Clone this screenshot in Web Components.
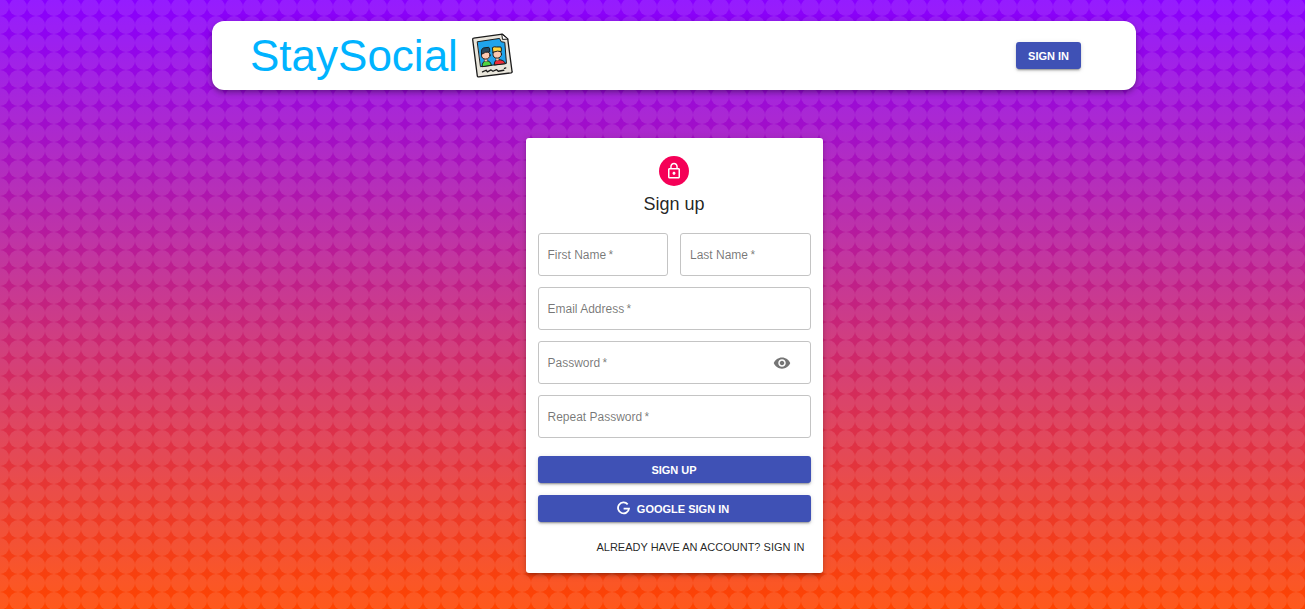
<!DOCTYPE html>
<html lang="en">
<head>
<meta charset="utf-8">
<meta name="viewport" content="width=device-width, initial-scale=1">
<title>StaySocial</title>
<style>
html { height: 100%; }
body { margin: 0; min-height: 100%; font-family: "Liberation Sans", Arial, sans-serif; color: rgba(0,0,0,.87);
  background-color: #c21f80;
  background-image:
    url("data:image/svg+xml,%3Csvg xmlns='http://www.w3.org/2000/svg' width='18' height='18'%3E%3Cg fill='%23fff' fill-opacity='.11'%3E%3Ccircle cx='0' cy='9' r='9'/%3E%3Ccircle cx='18' cy='9' r='9'/%3E%3C/g%3E%3C/svg%3E"),
    linear-gradient(#80f, #f40);
  background-position: 0 -2px, 0 0; background-size: 18px 18px, 100% 100vh; }
</style>
</head>
<body>
<social-page>
  <site-header slot="header">
    <app-logo></app-logo>
    <action-button slot="action">Sign in</action-button>
  </site-header>
  <auth-card>
    <form-field label="First Name" name="firstName" half></form-field>
    <form-field label="Last Name" name="lastName" half></form-field>
    <form-field label="Email Address" name="email" type="email"></form-field>
    <form-field label="Password" name="password" type="password" reveal></form-field>
    <form-field label="Repeat Password" name="confirmPassword" type="password"></form-field>
    <action-button slot="actions">Sign up</action-button>
    <action-button slot="actions"><svg slot="icon" width="15" height="15" viewBox="0 0 15 15" aria-hidden="true"><path fill="none" stroke="currentColor" stroke-width="1.800" d="M11.700 3.300A5.500 5.500 0 1 0 13 7.600H7.600"/></svg>Google Sign In</action-button>
    <a slot="switch" href="#signin">Already have an account? Sign in</a>
  </auth-card>
</social-page>
<script>
const define = (name, markup, setup) => customElements.define(name, class extends HTMLElement {
  constructor() {
    super();
    const t = document.createElement('template');
    t.innerHTML = markup;
    this.attachShadow({ mode: 'open' }).append(t.content.cloneNode(true));
    if (setup) setup(this, this.shadowRoot);
  }
});

define('social-page', `
<style>
:host { display: block; padding: 21px 0 36px 43px; }
main { display: flex; justify-content: center; padding-top: 48px; }
</style>
<slot name="header"></slot><main><slot></slot></main>`);

define('site-header', `
<style>
:host { display: block; max-width: 924px; margin: 0 auto; }
header { display: flex; align-items: center; justify-content: space-between; box-sizing: border-box; min-height: 69px;
  padding: 0 55px 0 38px; border-radius: 12px; background: #fff;
  box-shadow: 0 2px 4px -1px rgba(0,0,0,.2), 0 4px 5px rgba(0,0,0,.14), 0 1px 10px rgba(0,0,0,.12); }
</style>
<header><slot></slot><slot name="action"></slot></header>`);

define('app-logo', `
<style>
:host { display: block; }
a { display: flex; align-items: center; gap: 14px; color: #00b3ff; text-decoration: none; font-size: 44px; line-height: 52px; }
svg { display: block; }
</style>
<a href="#home">StaySocial
<svg width="41" height="45" viewBox="29 26 125 136" role="img" aria-label="Photo of two friends" stroke="#1b1b1b" stroke-linejoin="round" stroke-linecap="round">
  <path d="M34 41 Q31 41 31 45 L45 155 Q46 160 50 159 L148 147 Q152 146 151 142 L138 44 L122 29 Z" fill="#e9e6dc" stroke-width="4"/>
  <path d="M120 30 L122 45 L138 44 Z" fill="#fff" stroke-width="3"/>
  <path d="M46 52 L113 42 L118 52 L129 54 L134 118 L56 128 Z" fill="#1fa4ec" stroke-width="3"/>
  <path d="M60 127 Q60 111 72 110 Q85 109 88 123 Z" fill="#4fd53f" stroke-width="3"/>
  <path d="M97 122 Q96 108 108 107 Q126 106 131 118 Z" fill="#ee2b38" stroke-width="3"/>
  <path d="M67 102 h9 v9 q-5 4 -9 0z M102 100 h9 v8 q-5 4 -9 0z" fill="#fbc5a8" stroke-width="1"/>
  <ellipse cx="71" cy="93" rx="13" ry="12" fill="#fcc9b0" stroke-width="3"/>
  <ellipse cx="106" cy="90" rx="13" ry="12" fill="#fcc9b0" stroke-width="3"/>
  <path d="M58 90 Q56 73 64 71 L80 69 Q84 71 83 83 Q70 82 58 90Z" fill="#26475e" stroke-width="3"/>
  <path d="M93 84 L91 70 Q97 66 103 68 L117 68 Q120 74 118 82 Q108 78 93 84Z" fill="#ffd43d" stroke-width="3"/>
  <path d="M61 144 L72 139 L76 144 L87 138 L93 142 L104 137 L109 142 L126 139 M128 133 L132 132" fill="none" stroke-width="4"/>
</svg></a>`);

define('action-button', `
<style>
:host { display: block; }
button { display: flex; align-items: center; justify-content: center; gap: 6px; width: 100%; min-height: 27px; padding: 0 12px;
  border: 0; border-radius: 3px; background: #3f51b5; color: #fff; cursor: pointer;
  font: 700 11px/18px "Liberation Sans", Arial, sans-serif; text-transform: uppercase;
  box-shadow: 0 3px 1px -2px rgba(0,0,0,.2), 0 2px 2px rgba(0,0,0,.14), 0 1px 5px rgba(0,0,0,.12); }
::slotted(svg) { margin-left: -3px; }
</style>
<button type="button"><slot name="icon"></slot><span><slot></slot></span></button>`);

define('auth-card', `
<style>
:host { display: block; width: 297px; max-width: 100%; }
section { padding: 18px 12px 17px; border-radius: 3px; background: #fff;
  box-shadow: 0 3px 3px -2px rgba(0,0,0,.2), 0 3px 4px rgba(0,0,0,.14), 0 1px 8px rgba(0,0,0,.12); }
.badge { display: grid; place-items: center; width: 30px; height: 30px; margin: 0 auto 6px; border-radius: 50%; background: #f50057; }
h1 { margin: 0 0 17px; text-align: center; font-size: 18px; line-height: 24px; font-weight: 400; }
.fields { display: grid; grid-template-columns: 1fr 1fr; gap: 11px 12px; margin-bottom: 18px; }
.actions { display: grid; gap: 12px; }
.switch { display: flex; justify-content: flex-end; padding: 16px 6px 0; }
::slotted(a) { color: inherit; text-decoration: none; text-transform: uppercase; font-size: 11px; line-height: 18px; }
</style>
<section>
  <div class="badge"><svg width="18" height="18" viewBox="0 0 24 24" aria-hidden="true"><path fill="#fff" d="M12 17c1.100 0 2-.9 2-2s-.9-2-2-2-2 .9-2 2 .9 2 2 2zm6-9h-1V6c0-2.760-2.240-5-5-5S7 3.240 7 6v2H6c-1.100 0-2 .9-2 2v10c0 1.100.9 2 2 2h12c1.100 0 2-.9 2-2V10c0-1.100-.9-2-2-2zM8.900 6c0-1.710 1.390-3.100 3.100-3.100s3.100 1.390 3.100 3.100v2H8.900V6zM18 20H6V10h12v10z"/></svg></div>
  <h1>Sign up</h1>
  <form>
    <div class="fields"><slot></slot></div>
    <div class="actions"><slot name="actions"></slot></div>
    <div class="switch"><slot name="switch"></slot></div>
  </form>
</section>`);

define('form-field', `
<style>
:host { display: block; grid-column: 1 / -1; }
:host([half]) { grid-column: auto; }
.box { display: grid; grid-template-columns: 1fr auto; align-items: center; box-sizing: border-box; height: 43px; padding: 0 9px;
  border: 1px solid #c4c4c4; border-radius: 3px; }
.box:focus-within { border-color: #3f51b5; }
label, input { grid-area: 1 / 1; min-width: 0; font: 12px/18px "Liberation Sans", Arial, sans-serif; }
label { color: rgba(0,0,0,.54); pointer-events: none; white-space: nowrap; }
input { width: 100%; padding: 0; border: 0; outline: 0; background: none; color: inherit; }
input:not(:placeholder-shown) + label, input:focus + label { visibility: hidden; }
button { display: none; padding: 0; border: 0; margin-right: 10px; background: none; color: #757575; cursor: pointer; }
:host([reveal]) button { display: block; }
svg { display: block; }
</style>
<div class="box">
  <input id="field" placeholder=" " required>
  <label for="field"></label>
  <button type="button" aria-label="Show password"><svg width="18" height="18" viewBox="0 0 24 24" aria-hidden="true"><path fill="currentColor" d="M12 4.500C7 4.500 2.730 7.610 1 12c1.730 4.390 6 7.500 11 7.500s9.270-3.110 11-7.500c-1.730-4.390-6-7.500-11-7.500zM12 17c-2.760 0-5-2.240-5-5s2.240-5 5-5 5 2.240 5 5-2.240 5-5 5zm0-8c-1.660 0-3 1.340-3 3s1.340 3 3 3 3-1.340 3-3-1.340-3-3-3z"/></svg></button>
</div>`, (host, root) => {
  const input = root.querySelector('input');
  root.querySelector('label').textContent = host.getAttribute('label') + '\u2009*';
  input.type = host.getAttribute('type') || 'text';
  input.name = host.getAttribute('name');
  root.querySelector('button').onclick = () => { input.type = input.type === 'password' ? 'text' : 'password'; };
});
</script>
</body>
</html>
